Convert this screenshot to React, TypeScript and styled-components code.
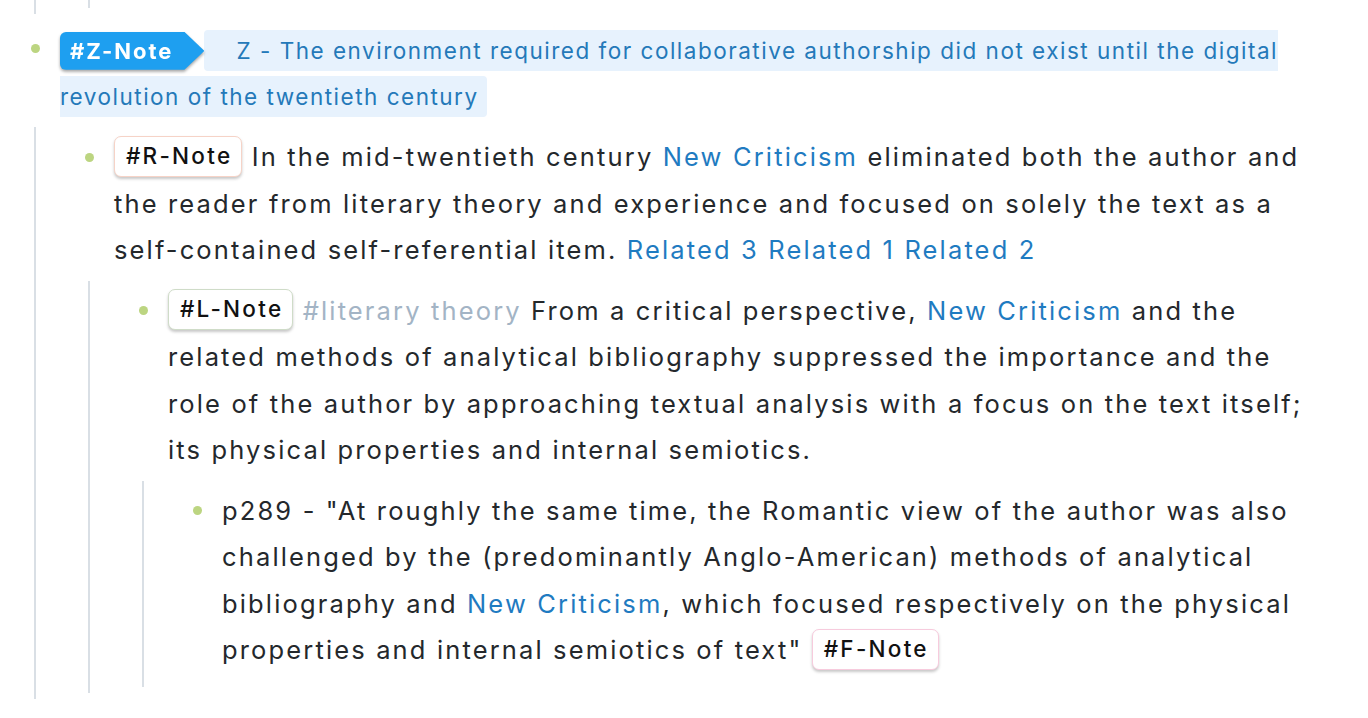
import React from "react";
import styled, { createGlobalStyle } from "styled-components";

const GlobalStyle = createGlobalStyle`
  html, body { margin: 0; padding: 0; background: #ffffff; }
  body {
    font-family: Inter, "Noto Sans", "Liberation Sans", sans-serif;
    -webkit-font-smoothing: antialiased;
  }
`;

const Page = styled.div`
  padding: 0 48px 0 10px;
  overflow: hidden;
  height: 718px;
  box-sizing: border-box;
`;

const Block = styled.div`
  display: flex;
  flex-direction: column;
  padding-bottom: 6px;
`;

const Row = styled.div`
  display: flex;
  align-items: flex-start;
  padding: 7px 0;
`;

const BulletCol = styled.div<{ $lh: number }>`
  flex: 0 0 50px;
  height: ${(p) => p.$lh}px;
  display: flex;
  align-items: center;
  justify-content: center;
`;

const Dot = styled.span<{ $dy?: number }>`
  width: 9px;
  height: 9px;
  border-radius: 50%;
  background: #bcd581;
  transform: translateY(${(p) => p.$dy ?? 0}px);
`;

const Content = styled.div<{ $size: number; $lh: number; $ls: number }>`
  flex: 1;
  min-width: 0;
  font-size: ${(p) => p.$size}px;
  line-height: ${(p) => p.$lh}px;
  letter-spacing: ${(p) => p.$ls}em;
  color: #24282c;
`;

const Children = styled.div`
  margin-left: 24px;
  border-left: 2px solid #d9dfe5;
  padding-left: 28px;
`;

const Tail = styled.div<{ $h: number }>`
  margin-left: 24px;
  border-left: 2px solid #d9dfe5;
  padding-left: 28px;
  height: ${(p) => p.$h}px;
`;

const TailBlock = styled.div`
  padding-bottom: 7px;
`;

const ZTagWrap = styled.span`
  display: inline-block;
  vertical-align: middle;
  filter: drop-shadow(0 2px 1.5px rgba(0, 0, 0, 0.35));
  margin-top: -4px;
`;

const ZTag = styled.span`
  display: block;
  height: 38px;
  line-height: 38px;
  padding: 0 31px 0 10px;
  background: #1e9ff0;
  color: #ffffff;
  font-weight: 700;
  font-size: 22px;
  letter-spacing: 0.09em;
  border-radius: 6px 0 0 6px;
  clip-path: polygon(0 0, calc(100% - 20px) 0, 100% 50%, calc(100% - 20px) 100%, 0 100%);
`;

const Mark = styled.span`
  background: #e7f2fd;
  color: #2479b9;
  padding: 7px 8px 7px 32px;
  border-radius: 4px;
`;

const Chip = styled.span<{ $border: string }>`
  display: inline-block;
  vertical-align: middle;
  margin-top: -6px;
  height: 41px;
  box-sizing: border-box;
  line-height: 37px;
  padding: 0 9px 0 11px;
  border: 1.5px solid ${(p) => p.$border};
  border-radius: 7px;
  background: #ffffff;
  color: #111111;
  font-size: 22.5px;
  font-weight: 500;
  letter-spacing: 0.1em;
  box-shadow: 0 2px 3px rgba(0, 0, 0, 0.22);
`;

const Link = styled.span`
  color: #1f7bc1;
`;

const Hashtag = styled.span`
  color: #a3b4c5;
`;

const MAIN = 25.5;
const LS = 0.084;
const LH = 46.5;

export default function App() {
  return (
    <>
      <GlobalStyle />
      <Page>
        <TailBlock>
          <Tail $h={14}>
            <Tail $h={8} />
          </Tail>
        </TailBlock>

        <Block>
          <Row>
            <BulletCol $lh={46}>
              <Dot $dy={-3} />
            </BulletCol>
            <Content $size={22.5} $lh={46} $ls={0.067}>
              <ZTagWrap>
                <ZTag>#Z-Note</ZTag>
              </ZTagWrap>
              <Mark>
                Z - The environment required for collaborative authorship did not exist until the digital
                revolution of the twentieth century
              </Mark>
            </Content>
          </Row>
          <Children>
            <Block>
              <Row>
                <BulletCol $lh={LH}>
                  <Dot />
                </BulletCol>
                <Content $size={MAIN} $lh={LH} $ls={LS}>
                  <Chip $border="#f6d3c7">#R-Note</Chip>{" "}
                  In the mid-twentieth century <Link>New Criticism</Link> eliminated both the author and the
                  reader from literary theory and experience and focused on solely the text as a
                  self-contained self-referential item. <Link>Related 3</Link> <Link>Related 1</Link>{" "}
                  <Link>Related 2</Link>
                </Content>
              </Row>
              <Children>
                <Block>
                  <Row>
                    <BulletCol $lh={LH}>
                      <Dot />
                    </BulletCol>
                    <Content $size={MAIN} $lh={LH} $ls={LS}>
                      <Chip $border="#cfdcc8">#L-Note</Chip> <Hashtag>#literary theory</Hashtag> From a
                      critical perspective, <Link>New Criticism</Link> and the related methods of analytical
                      bibliography suppressed the importance and the role of the author by approaching
                      textual analysis with a focus on the text itself; its physical properties and internal
                      semiotics.
                    </Content>
                  </Row>
                  <Children>
                    <Block>
                      <Row>
                        <BulletCol $lh={LH}>
                          <Dot />
                        </BulletCol>
                        <Content $size={MAIN} $lh={LH} $ls={LS}>
                          p289 - "At roughly the same time, the Romantic view of the author was also
                          challenged by the (predominantly Anglo-American) methods of analytical
                          bibliography and <Link>New Criticism</Link>, which focused respectively on the
                          physical properties and internal semiotics of text"{" "}
                          <Chip $border="#f7cbdd">#F-Note</Chip>
                        </Content>
                      </Row>
                    </Block>
                  </Children>
                </Block>
              </Children>
            </Block>
          </Children>
        </Block>
      </Page>
    </>
  );
}
